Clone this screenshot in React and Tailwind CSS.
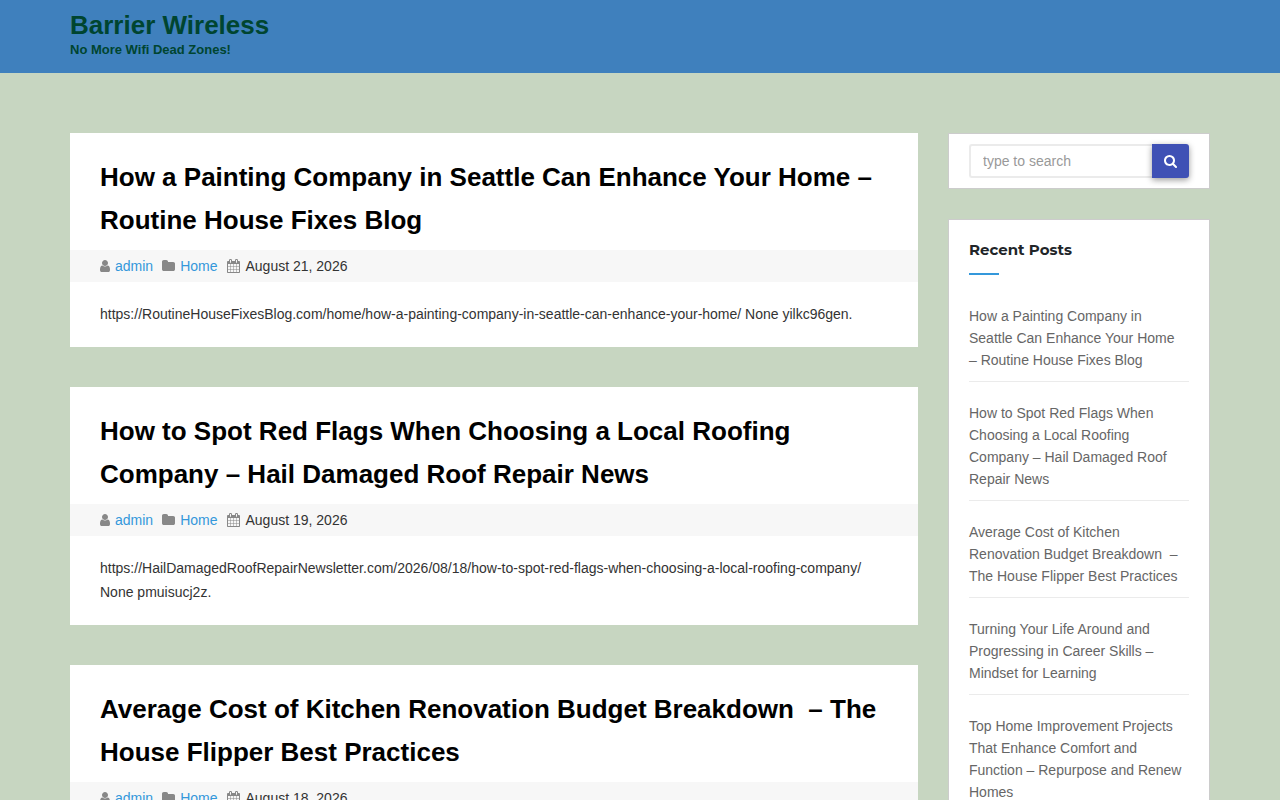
// src/App.jsx
import React from 'react';

const posts = [
  {
    title: 'How a Painting Company in Seattle Can Enhance Your Home – Routine House Fixes Blog',
    date: 'August 21, 2026',
    text: 'https://RoutineHouseFixesBlog.com/home/how-a-painting-company-in-seattle-can-enhance-your-home/ None yilkc96gen.',
  },
  {
    title: 'How to Spot Red Flags When Choosing a Local Roofing Company – Hail Damaged Roof Repair News',
    date: 'August 19, 2026',
    text: 'https://HailDamagedRoofRepairNewsletter.com/2026/08/18/how-to-spot-red-flags-when-choosing-a-local-roofing-company/ None pmuisucj2z.',
  },
  {
    title: 'Average Cost of Kitchen Renovation Budget Breakdown\u00a0 – The House Flipper Best Practices',
    date: 'August 18, 2026',
    text: '',
  },
];

const recent = [
  ...posts.map((post) => post.title),
  'Turning Your Life Around and Progressing in Career Skills – Mindset for Learning',
  'Top Home Improvement Projects That Enhance Comfort and Function – Repurpose and Renew Homes',
];

const paths = {
  user: 'M1536 1399q0 109-62.5 187t-150.5 78h-854q-88 0-150.5-78t-62.5-187q0-85 8.5-160.5t31.5-152 58.5-131 94-89 134.5-34.5q131 128 313 128t313-128q76 0 134.5 34.5t94 89 58.5 131 31.5 152 8.5 160.5zm-256-887q0 159-112.5 271.5t-271.5 112.5-271.5-112.5-112.5-271.5 112.5-271.5 271.5-112.5 271.5 112.5 112.5 271.5z',
  folder: 'M1728 608v704q0 92-66 158t-158 66h-1216q-92 0-158-66t-66-158v-960q0-92 66-158t158-66h320q92 0 158 66t66 158v32h672q92 0 158 66t66 158z',
  calendar: 'M192 1664h288v-288h-288v288zm352 0h320v-288h-320v288zm-352-352h288v-320h-288v320zm352 0h320v-320h-320v320zm-352-384h288v-288h-288v288zm736 736h320v-288h-320v288zm-384-736h320v-288h-320v288zm768 736h288v-288h-288v288zm-384-352h320v-320h-320v320zm-352-864v-288q0-13-9.5-22.5t-22.5-9.5h-64q-13 0-22.5 9.5t-9.5 22.5v288q0 13 9.5 22.5t22.5 9.5h64q13 0 22.5-9.5t9.5-22.5zm736 864h288v-320h-288v320zm-384-384h320v-288h-320v288zm384 0h288v-288h-288v288zm32-480v-288q0-13-9.5-22.5t-22.5-9.5h-64q-13 0-22.5 9.5t-9.5 22.5v288q0 13 9.5 22.5t22.5 9.5h64q13 0 22.5-9.5t9.5-22.5zm384-64v1280q0 52-38 90t-90 38h-1408q-52 0-90-38t-38-90v-1280q0-52 38-90t90-38h128v-96q0-66 47-113t113-47h64q66 0 113 47t47 113v96h384v-96q0-66 47-113t113-47h64q66 0 113 47t47 113v96h128q52 0 90 38t38 90z',
  search: 'M1216 832q0-185-131.5-316.5t-316.5-131.5-316.5 131.5-131.5 316.5 131.5 316.5 316.5 131.5 316.5-131.5 131.5-316.5zm512 832q0 52-38 90t-90 38q-54 0-90-38l-343-342q-179 124-399 124-143 0-273.5-55.5t-225-150-150-225-55.5-273.5 55.5-273.5 150-225 225-150 273.5-55.5 273.5 55.5 225 150 150 225 55.5 273.5q0 220-124 399l343 343q37 37 37 90z',
};

function Icon({ name, viewBox, className }) {
  return (
    <svg viewBox={viewBox} className={className} fill="currentColor" aria-hidden="true">
      <path d={paths[name]} />
    </svg>
  );
}

function PostCard({ post }) {
  return (
    <article className="bg-white">
      <h2 className="px-[30px] pt-[23px] pb-2 text-[26px] leading-[43px] font-bold text-black">
        <a href="#post">{post.title}</a>
      </h2>
      <div className="flex h-8 items-center bg-[#f7f7f7] px-[30px]">
        <Icon name="user" viewBox="256 0 1280 1792" className="mr-[5px] h-3.5 w-2.5 text-[#888]" />
        <a href="#author" className="mr-[9px] text-[#3498db]">admin</a>
        <Icon name="folder" viewBox="64 0 1664 1792" className="mr-[5px] h-3.5 w-[13px] text-[#888]" />
        <a href="#category" className="mr-[9px] text-[#3498db]">Home</a>
        <Icon name="calendar" viewBox="64 0 1664 1792" className="mr-1.5 h-3.5 w-[13px] text-[#888]" />
        <time>{post.date}</time>
      </div>
      <p className="px-[30px] pt-5 pb-[21px]">{post.text}</p>
    </article>
  );
}

function SearchBox() {
  return (
    <form className="flex border border-[#ccc] bg-white px-5 py-2.5" onSubmit={(e) => e.preventDefault()}>
      <input
        type="search"
        aria-label="Search"
        placeholder="type to search"
        className="h-[34px] min-w-0 flex-1 rounded-l-[3px] border-2 border-r-0 border-[#ebebeb] px-3 text-sm outline-none placeholder:text-[#999]"
      />
      <button
        type="submit"
        aria-label="Submit search"
        className="flex h-[34px] w-[37px] items-center justify-center rounded-r-[3px] bg-[#3f51b5] text-white shadow-[0_2px_6px_rgba(0,0,0,0.4)]"
      >
        <Icon name="search" viewBox="64 128 1664 1664" className="h-[13px] w-[13px]" />
      </button>
    </form>
  );
}

function RecentPosts() {
  return (
    <section className="border border-[#ccc] bg-white px-5 pt-[18px] pb-5">
      <h3 className="font-['Montserrat','Inter',sans-serif] text-[15px] leading-6 font-bold text-[#212529]">Recent Posts</h3>
      <div className="mt-[11px] mb-[30px] h-0.5 w-[30px] bg-[#3498db]" />
      <ul className="flex flex-col gap-5">
        {recent.map((title) => (
          <li key={title} className="border-b border-[#ebebeb] pr-1 pb-2.5 leading-[22px] text-[#666]">
            <a href="#post">{title}</a>
          </li>
        ))}
      </ul>
    </section>
  );
}

export default function App() {
  return (
    <div className="min-h-screen bg-[#c7d6c1] font-['Liberation_Sans',Arial,sans-serif] text-sm leading-6 text-[#333]">
      <header className="bg-[#3f80bd] pt-2.5 pb-[13px] font-bold text-[#004530]">
        <div className="mx-auto max-w-[1140px]">
          <a href="#home" className="block text-[26px] leading-[30px]">Barrier Wireless</a>
          <p className="text-[13px] leading-5">No More Wifi Dead Zones!</p>
        </div>
      </header>
      <div className="mx-auto flex max-w-[1140px] items-start gap-[30px] py-[60px]">
        <main className="flex min-w-0 flex-1 flex-col gap-10">
          {posts.map((post) => (
            <PostCard key={post.title} post={post} />
          ))}
        </main>
        <aside className="flex w-[262px] flex-col gap-[30px]">
          <SearchBox />
          <RecentPosts />
        </aside>
      </div>
    </div>
  );
}
